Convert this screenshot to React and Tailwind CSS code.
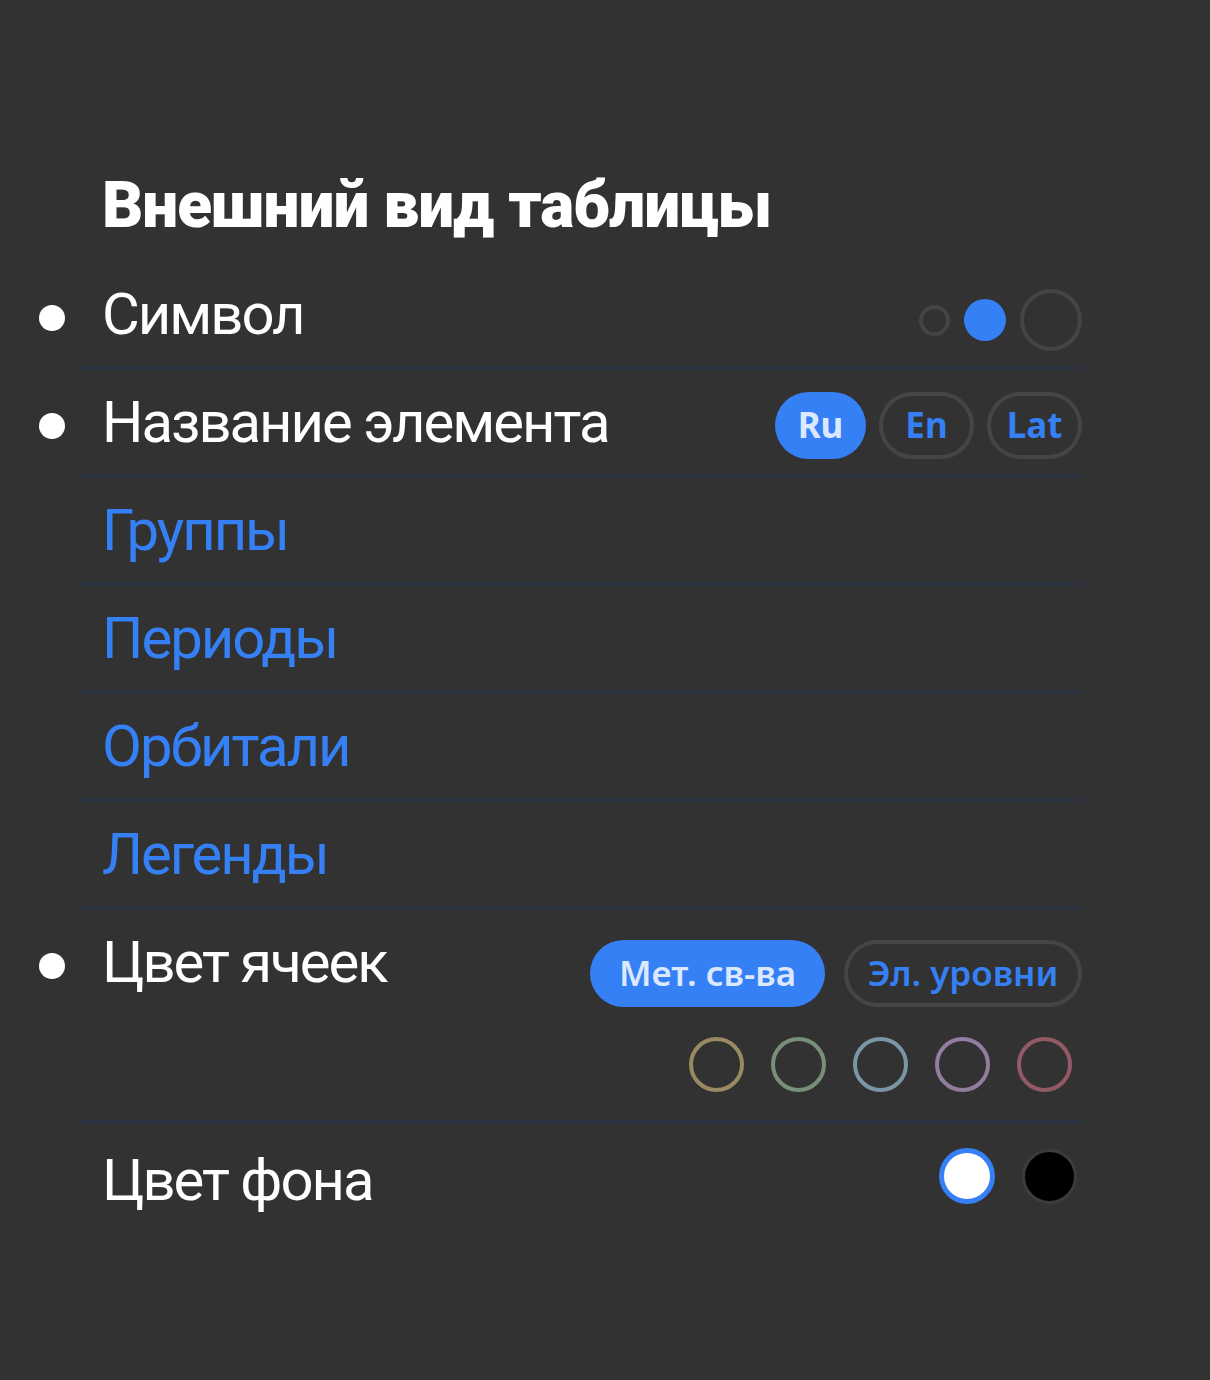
import React from 'react';

const Bullet = ({ show }) => (
  <div className="w-[80px] shrink-0 flex items-center h-[104px]">
    {show && <span className="ml-[39px] mt-[8px] w-[26px] h-[26px] rounded-full bg-white" />}
  </div>
);

const Pill = ({ active, children, className = '' }) => (
  <button
    className={`h-[67px] rounded-full flex items-center justify-center font-['Noto_Sans',sans-serif] ${
      active ? 'bg-[#3580f5] text-[#dce8ff]' : 'border-[4px] border-[#454545] text-[#3580f5]'
    } ${className}`}
  >
    {children}
  </button>
);

const LinkRow = ({ label }) => (
  <div className="flex">
    <Bullet show={false} />
    <div className="flex-1 h-[108px] border-b-[4px] border-[#2c3441] pl-[22px] flex items-center">
      <span className="text-[58px] text-[#3580f5] leading-none tracking-[-2px]">{label}</span>
    </div>
  </div>
);

const cellColors = [
  'border-[#9a8a64]',
  'border-[#78907a]',
  'border-[#7a95a3]',
  'border-[#937d9e]',
  'border-[#935a66]',
];

export default function App() {
  return (
    <div className="min-h-[1380px] bg-[#323232] text-white font-['Roboto',sans-serif]">
      <div className="w-[1082px] pt-[150px]">
        <h1 className="h-[112px] pl-[102px] flex items-center text-[64px] font-black tracking-[-1px] leading-none">
          Внешний вид таблицы
        </h1>

        {/* Символ */}
        <div className="flex">
          <Bullet show />
          <div className="flex-1 h-[108px] border-b-[4px] border-[#2c3441] pl-[22px] flex items-center justify-between">
            <span className="text-[58px] leading-none tracking-[-2px]">Символ</span>
            <div className="flex items-center gap-[14px] mt-[12px]">
              <span className="w-[31px] h-[31px] rounded-full border-[4px] border-[#444444]" />
              <span className="w-[42px] h-[42px] rounded-full bg-[#3580f5]" />
              <span className="w-[62px] h-[62px] rounded-full border-[4px] border-[#444444]" />
            </div>
          </div>
        </div>

        {/* Название элемента */}
        <div className="flex">
          <Bullet show />
          <div className="flex-1 h-[108px] border-b-[4px] border-[#2c3441] pl-[22px] flex items-center justify-between">
            <span className="text-[58px] leading-none tracking-[-2px]">Название элемента</span>
            <div className="flex items-center gap-[13px] mt-[6px]">
              <Pill active className="w-[91px] text-[35px] font-bold">Ru</Pill>
              <Pill className="w-[95px] text-[35px] font-bold">En</Pill>
              <Pill className="w-[95px] text-[35px] font-bold">Lat</Pill>
            </div>
          </div>
        </div>

        <LinkRow label="Группы" />
        <LinkRow label="Периоды" />
        <LinkRow label="Орбитали" />
        <LinkRow label="Легенды" />

        {/* Цвет ячеек */}
        <div className="flex">
          <div className="w-[80px] shrink-0 flex items-start">
            <Bullet show />
          </div>
          <div className="flex-1 border-b-[4px] border-[#2c3441] pl-[22px] flex justify-between">
            <div className="h-[104px] flex items-center">
              <span className="text-[58px] leading-none tracking-[-2px]">Цвет ячеек</span>
            </div>
            <div className="flex flex-col items-end pt-[30px] pb-[28px] gap-[30px]">
              <div className="flex gap-[19px]">
                <Pill active className="w-[235px] text-[35px] font-semibold">Мет. св-ва</Pill>
                <Pill className="w-[238px] text-[35px] font-semibold">Эл. уровни</Pill>
              </div>
              <div className="flex gap-[27px] pr-[10px]">
                {cellColors.map((c) => (
                  <span key={c} className={`w-[55px] h-[55px] rounded-full border-[4px] ${c}`} />
                ))}
              </div>
            </div>
          </div>
        </div>

        {/* Цвет фона */}
        <div className="flex mt-[4px]">
          <Bullet show={false} />
          <div className="flex-1 h-[104px] pl-[22px] flex items-center justify-between">
            <span className="text-[58px] leading-none tracking-[-2px]">Цвет фона</span>
            <div className="flex items-center gap-[27px] pr-[5px] mt-[-8px]">
              <span className="w-[56px] h-[56px] rounded-full bg-white border-[5px] border-[#3580f5]" />
              <span className="w-[55px] h-[55px] rounded-full bg-black border-[3px] border-[#3c3c3c]" />
            </div>
          </div>
        </div>
      </div>
    </div>
  );
}
